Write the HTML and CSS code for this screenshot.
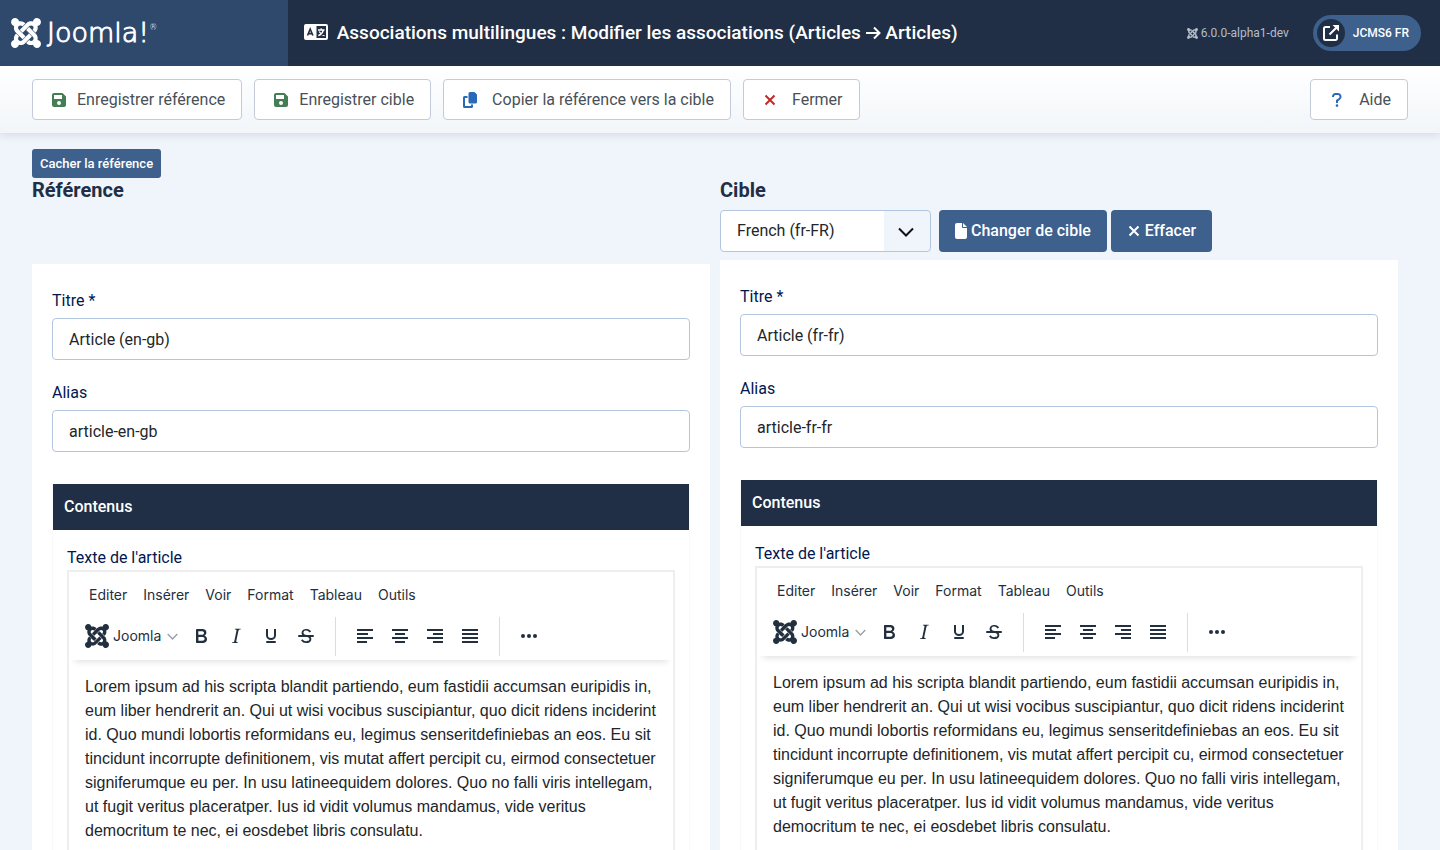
FILE: index.html
```html
<!DOCTYPE html>
<html lang="fr">
<head>
<meta charset="utf-8">
<meta name="viewport" content="width=device-width, initial-scale=1">
<title>Associations multilingues : Modifier les associations</title>
<link rel="stylesheet" href="styles.css">
</head>
<body>
<svg class="sprite" aria-hidden="true">
  <symbol id="joomla" viewBox="0 32 448 448"><path d="M.6 92.1C.6 58.8 27.4 32 60.4 32c30 0 54.5 21.9 59.2 50.2 32.6-7.6 67.1.6 96.5 30l-44.3 44.3c-20.5-20.5-42.6-16.3-55.4-3.5-14.3 14.3-14.3 37.9 0 52.2l99.5 99.5-44 44.3c-87.7-87.2-49.7-49.7-99.8-99.7-26.8-26.5-35-64.8-24.8-98.9C20.4 144.6.6 120.7.6 92.1zm129.5 116.4l44.3 44.3c10-10 89.7-89.7 99.7-99.8 14.3-14.3 37.6-14.3 51.9 0 12.8 12.8 17 35-3.5 55.4l44 44.3c31.2-31.2 38.5-67.6 28.9-101.2 29.2-4.1 51.9-29.2 51.9-59.5 0-33.2-26.8-60.1-59.8-60.1-30.3 0-55.4 22.5-59.5 51.6-33.8-9.9-71.7-1.5-98.3 25.1-18.3 19.1-71.1 71.5-99.6 99.9zm266.3 152.2c8.2-32.7-.9-68.5-26.3-93.9-11.8-12.2 5 4.7-99.5-99.7l-44.3 44.3 99.7 99.7c14.3 14.3 14.3 37.6 0 51.9-12.8 12.8-35 17-55.4-3.5l-44 44.3c27.6 30.2 68 38.8 102.7 28 5.5 27.4 29.7 48.1 58.9 48.1 33 0 59.8-26.8 59.8-60.1 0-30.2-22.5-55-51.6-59.1zm-84.3-53.1l-44-44.3c-87 86.4-50.4 50.4-99.7 99.8-14.3 14.3-37.6 14.3-51.9 0-13.1-13.4-16.9-35.3 3.2-55.4l-44-44.3c-30.2 30.2-38 65.2-29.5 98.3-26.7 6-46.2 29.9-46.2 58.2C0 453.2 26.8 480 59.8 480c28.6 0 52.5-19.8 58.6-46.7 32.7 8.2 68.5-.6 94.2-26 32.1-32 12.2-12.4 99.5-99.7z"/></symbol>
  <symbol id="save" viewBox="0 0 14 14"><path fill-rule="evenodd" d="M2 0h8.500L14 3.500V12a2 2 0 0 1-2 2H2a2 2 0 0 1-2-2V2a2 2 0 0 1 2-2zm0 2v4h8V2zm5 6a2 2 0 1 0 0 4 2 2 0 0 0 0-4z"/></symbol>
  <symbol id="copy" viewBox="0 0 14 16"><path d="M7 0h4.500L14 2.500V10a1.500 1.500 0 0 1-1.500 1.500H7A1.500 1.500 0 0 1 5.500 10V1.500A1.500 1.500 0 0 1 7 0z"/><path d="M1.500 4H4.500v2H2v8h6v-1.500h2v2a1.500 1.500 0 0 1-1.500 1.500h-7A1.500 1.500 0 0 1 0 14.500v-9A1.500 1.500 0 0 1 1.500 4z"/></symbol>
  <symbol id="cross" viewBox="0 0 12 12"><path d="M1.500 1.500l9 9m0-9l-9 9" fill="none" stroke="currentColor" stroke-width="2"/></symbol>
  <symbol id="help" viewBox="0 0 10 14"><path d="M1 4V3.500A2.500 2.500 0 0 1 3.500 1h2.500a2.700 2.700 0 0 1 1.300 5L5 7.600V10" fill="none" stroke="currentColor" stroke-width="2"/><circle cx="5" cy="12.600" r="1.300"/></symbol>
  <symbol id="file" viewBox="0 0 12 16"><path d="M2 0h5v4a1 1 0 0 0 1 1h4v9a2 2 0 0 1-2 2H2a2 2 0 0 1-2-2V2a2 2 0 0 1 2-2zm6 0l4 4H8z"/></symbol>
  <symbol id="chevron" viewBox="0 0 16 10"><path d="M1 1.500l7 7 7-7" fill="none" stroke="currentColor" stroke-width="2"/></symbol>
  <symbol id="bold" viewBox="0 0 24 24"><path fill-rule="evenodd" d="M7.8 19c-.3 0-.5 0-.6-.2l-.2-.5V5.700c0-.2 0-.4.2-.5l.6-.2h5c1.500 0 2.700.3 3.500 1 .7.6 1.100 1.400 1.100 2.500a3 3 0 0 1-.6 1.900c-.4.6-1 1-1.600 1.200.4.1.9.3 1.300.6s.8.7 1 1.200c.4.4.5 1 .5 1.600 0 1.300-.4 2.300-1.300 3-.8.7-2.100 1-3.800 1H7.800zm5-8.300c.6 0 1.200-.1 1.600-.5.4-.3.6-.7.6-1.300 0-1.100-.8-1.700-2.300-1.700H9.300v3.500h3.400zm.5 6c.7 0 1.300-.1 1.700-.4.4-.4.6-.9.6-1.500s-.2-1-.7-1.400c-.4-.3-1-.4-2-.4H9.400v3.800h4z"/></symbol>
  <symbol id="italic" viewBox="0 0 24 24"><path d="m16.700 4.700-.1.9h-.3c-.6 0-1 0-1.400.3-.3.3-.4.6-.5 1.100l-2.100 9.800v.6c0 .5.4.8 1.400.8h.2l-.2.8H8l.2-.8h.2c1.100 0 1.800-.5 2-1.500l2-9.800.1-.5c0-.6-.4-.8-1.400-.8h-.3l.2-.9h5.800z"/></symbol>
  <symbol id="underline" viewBox="0 0 24 24"><path d="M8 5v6.500a4 3.500 0 0 0 8 0V5" fill="none" stroke="currentColor" stroke-width="2"/><rect x="7" y="17" width="10" height="2" rx="1"/></symbol>
  <symbol id="strike" viewBox="0 0 24 24"><path d="M15.600 8.500c-.5-.7-1-1.100-1.300-1.300-.6-.4-1.300-.6-2-.6-2.700 0-2.800 1.700-2.800 2.100 0 1.600 1.800 2 3.200 2.300 4.400.9 4.600 2.800 4.600 3.900 0 1.400-.7 4.100-5 4.100A6.200 6.200 0 0 1 7 16.400l1.500-1.100c.4.6 1.600 2 3.700 2 1.600 0 2.500-.4 3-1.200.4-.8.3-2-.8-2.600-.7-.4-1.600-.7-2.900-1-1-.2-3.900-.8-3.900-3.600C7.600 6 10.300 5 12.400 5c2.900 0 4.200 1.600 4.700 2.400l-1.500 1.100z"/><rect x="4" y="11" width="16" height="2" rx="1"/></symbol>
  <symbol id="al-left" viewBox="0 0 24 24"><path d="M4 5h16v2H4zM4 9h11v2H4zM4 13h16v2H4zM4 17h10v2H4z"/></symbol>
  <symbol id="al-center" viewBox="0 0 24 24"><path d="M4 5h16v2H4zM7 9h10v2H7zM4 13h16v2H4zM7 17h10v2H7z"/></symbol>
  <symbol id="al-right" viewBox="0 0 24 24"><path d="M4 5h16v2H4zM10 9h10v2H10zM4 13h16v2H4zM10 17h10v2H10z"/></symbol>
  <symbol id="al-full" viewBox="0 0 24 24"><path d="M4 5h16v2H4zM4 9h16v2H4zM4 13h16v2H4zM4 17h16v2H4z"/></symbol>
  <symbol id="more" viewBox="0 0 24 24"><circle cx="6" cy="12" r="2"/><circle cx="12" cy="12" r="2"/><circle cx="18" cy="12" r="2"/></symbol>
</svg>

<header class="header">
  <a class="brand" href="#">
    <svg class="brand-mark" aria-hidden="true"><use href="#joomla"/></svg>
    <span class="brand-name">Joomla!<sup>®</sup></span>
  </a>
  <h1 class="page-title">
    <svg class="title-icon" viewBox="0 0 24 16" aria-hidden="true"><rect width="24" height="16" rx="2" fill="#fff"/><path fill="#202f45" d="M12.500 2H22v12h-9.500z"/><path d="M3.500 11.500L6.200 5l2.700 6.500M4.400 9.600H8" fill="none" stroke="#202f45" stroke-width="1.600"/><path d="M14 6h6.500M17.200 4.200V6M19.300 6.500c-.6 2.200-2.500 4.200-5 5.200M15.200 7.500c.9 1.800 2.800 3.500 5.300 4.200" fill="none" stroke="#fff" stroke-width="1.300"/></svg>
    Associations multilingues : Modifier les associations (Articles
    <svg class="title-arrow" viewBox="0 0 15 14" aria-label="vers"><path d="M0 7h13M8 1.500L13.500 7 8 12.500" fill="none" stroke="currentColor" stroke-width="2"/></svg>
    Articles)
  </h1>
  <div class="version"><svg aria-hidden="true"><use href="#joomla"/></svg>6.0.0-alpha1-dev</div>
  <a class="site-link" href="#">
    <span class="site-icon"><svg viewBox="0 0 16 16" aria-hidden="true"><path d="M7 2H2.500A1.500 1.500 0 0 0 1 3.500v10A1.500 1.500 0 0 0 2.500 15h10a1.500 1.500 0 0 0 1.500-1.500V9.500M6.500 9.500L13 3" fill="none" stroke="#fff" stroke-width="2"/><path d="M9.500 0H16v6.500z" fill="#fff"/></svg></span>
    JCMS6 FR
  </a>
</header>

<div class="subhead">
  <button class="tool" type="button"><svg class="ic-save" aria-hidden="true"><use href="#save"/></svg>Enregistrer référence</button>
  <button class="tool" type="button"><svg class="ic-save" aria-hidden="true"><use href="#save"/></svg>Enregistrer cible</button>
  <button class="tool" type="button"><svg class="ic-copy" aria-hidden="true"><use href="#copy"/></svg>Copier la référence vers la cible</button>
  <button class="tool" type="button"><svg class="ic-close" aria-hidden="true"><use href="#cross"/></svg>Fermer</button>
  <button class="tool tool-help" type="button"><svg class="ic-help" aria-hidden="true"><use href="#help"/></svg>Aide</button>
</div>

<main class="content">
  <button class="btn btn-small" type="button">Cacher la référence</button>
  <div class="columns">
    <section class="column">
      <div class="column-head column-head-ref"><h2>Référence</h2></div>
      <div class="panel">
        <div class="field"><label for="t1">Titre *</label><input id="t1" type="text" value="Article (en-gb)"></div>
        <div class="field"><label for="a1">Alias</label><input id="a1" type="text" value="article-en-gb"></div>
        <div class="box">
          <h3>Contenus</h3>
          <div class="box-body">
            <span class="box-label" id="l1">Texte de l'article</span>
            <div class="editor">
              <div class="editor-head">
                <div class="menubar"><button type="button">Editer</button><button type="button">Insérer</button><button type="button">Voir</button><button type="button">Format</button><button type="button">Tableau</button><button type="button">Outils</button></div>
                <div class="toolbar">
                  <button class="cms" type="button"><svg class="cms-icon" aria-hidden="true"><use href="#joomla"/></svg>Joomla<svg class="cms-arrow" aria-hidden="true"><use href="#chevron"/></svg></button>
                  <div class="group"><button type="button" aria-label="Gras"><svg><use href="#bold"/></svg></button><button type="button" aria-label="Italique"><svg><use href="#italic"/></svg></button><button type="button" aria-label="Souligné"><svg><use href="#underline"/></svg></button><button type="button" aria-label="Barré"><svg><use href="#strike"/></svg></button></div>
                  <div class="group"><button type="button" aria-label="Aligner à gauche"><svg><use href="#al-left"/></svg></button><button type="button" aria-label="Centrer"><svg><use href="#al-center"/></svg></button><button type="button" aria-label="Aligner à droite"><svg><use href="#al-right"/></svg></button><button type="button" aria-label="Justifier"><svg><use href="#al-full"/></svg></button></div>
                  <div class="group"><button type="button" aria-label="Plus"><svg><use href="#more"/></svg></button></div>
                </div>
              </div>
              <div class="editor-text" contenteditable="true" spellcheck="false" role="textbox" aria-labelledby="l1">Lorem ipsum ad his scripta blandit partiendo, eum fastidii accumsan euripidis in, eum liber hendrerit an. Qui ut wisi vocibus suscipiantur, quo dicit ridens inciderint id. Quo mundi lobortis reformidans eu, legimus senseritdefiniebas an eos. Eu sit tincidunt incorrupte definitionem, vis mutat affert percipit cu, eirmod consectetuer signiferumque eu per. In usu latineequidem dolores. Quo no falli viris intellegam, ut fugit veritus placeratper. Ius id vidit volumus mandamus, vide veritus democritum te nec, ei eosdebet libris consulatu.</div>
            </div>
          </div>
        </div>
      </div>
    </section>

    <section class="column">
      <div class="column-head">
        <h2>Cible</h2>
        <div class="target-bar">
          <div class="select"><select aria-label="Langue cible"><option>French (fr-FR)</option></select><svg aria-hidden="true"><use href="#chevron"/></svg></div>
          <button class="btn" type="button"><svg class="ic-file" aria-hidden="true"><use href="#file"/></svg>Changer de cible</button>
          <button class="btn" type="button"><svg class="ic-clear" aria-hidden="true"><use href="#cross"/></svg>Effacer</button>
        </div>
      </div>
      <div class="panel">
        <div class="field"><label for="t2">Titre *</label><input id="t2" type="text" value="Article (fr-fr)"></div>
        <div class="field"><label for="a2">Alias</label><input id="a2" type="text" value="article-fr-fr"></div>
        <div class="box">
          <h3>Contenus</h3>
          <div class="box-body">
            <span class="box-label" id="l2">Texte de l'article</span>
            <div class="editor">
              <div class="editor-head">
                <div class="menubar"><button type="button">Editer</button><button type="button">Insérer</button><button type="button">Voir</button><button type="button">Format</button><button type="button">Tableau</button><button type="button">Outils</button></div>
                <div class="toolbar">
                  <button class="cms" type="button"><svg class="cms-icon" aria-hidden="true"><use href="#joomla"/></svg>Joomla<svg class="cms-arrow" aria-hidden="true"><use href="#chevron"/></svg></button>
                  <div class="group"><button type="button" aria-label="Gras"><svg><use href="#bold"/></svg></button><button type="button" aria-label="Italique"><svg><use href="#italic"/></svg></button><button type="button" aria-label="Souligné"><svg><use href="#underline"/></svg></button><button type="button" aria-label="Barré"><svg><use href="#strike"/></svg></button></div>
                  <div class="group"><button type="button" aria-label="Aligner à gauche"><svg><use href="#al-left"/></svg></button><button type="button" aria-label="Centrer"><svg><use href="#al-center"/></svg></button><button type="button" aria-label="Aligner à droite"><svg><use href="#al-right"/></svg></button><button type="button" aria-label="Justifier"><svg><use href="#al-full"/></svg></button></div>
                  <div class="group"><button type="button" aria-label="Plus"><svg><use href="#more"/></svg></button></div>
                </div>
              </div>
              <div class="editor-text" contenteditable="true" spellcheck="false" role="textbox" aria-labelledby="l2">Lorem ipsum ad his scripta blandit partiendo, eum fastidii accumsan euripidis in, eum liber hendrerit an. Qui ut wisi vocibus suscipiantur, quo dicit ridens inciderint id. Quo mundi lobortis reformidans eu, legimus senseritdefiniebas an eos. Eu sit tincidunt incorrupte definitionem, vis mutat affert percipit cu, eirmod consectetuer signiferumque eu per. In usu latineequidem dolores. Quo no falli viris intellegam, ut fugit veritus placeratper. Ius id vidit volumus mandamus, vide veritus democritum te nec, ei eosdebet libris consulatu.</div>
            </div>
          </div>
        </div>
      </div>
    </section>
  </div>
</main>
</body>
</html>
```
FILE: styles.css
```css
* {
  box-sizing: border-box;
}

body {
  margin: 0;
  min-height: 100vh;
  display: flex;
  flex-direction: column;
  background: #f0f4fb;
  color: #22262a;
  font: 16px/24px Roboto, sans-serif;
}

button,
input,
select {
  font: inherit;
  color: inherit;
}

h1,
h2,
h3 {
  margin: 0;
}

svg {
  fill: currentColor;
  flex: none;
}

.sprite {
  display: none;
}

/* Header */
.header {
  display: flex;
  align-items: center;
  height: 66px;
  padding-right: 19px;
  background: #202f45;
  color: #fff;
}

.brand {
  display: flex;
  align-items: center;
  gap: 6px;
  width: 288px;
  height: 100%;
  padding-left: 11px;
  background: #2f496c;
  color: #fff;
  text-decoration: none;
}

.brand-mark {
  width: 30px;
  height: 30px;
}

.brand-name {
  font: 200 27px/30px "DejaVu Sans Light", "DejaVu Sans", sans-serif;
  -webkit-text-stroke: 1px #fff;
}

.brand-name sup {
  font-size: 8px;
  line-height: 8px;
  vertical-align: 12px;
  -webkit-text-stroke: 0;
}

.page-title {
  flex: 1;
  padding-left: 16px;
  font-size: 19px;
  font-weight: 500;
  line-height: 26px;
}

.title-icon {
  width: 24px;
  height: 16px;
  margin-right: 4px;
  vertical-align: -1px;
}

.title-arrow {
  width: 15px;
  height: 14px;
  vertical-align: -1px;
}

.version {
  display: flex;
  align-items: center;
  gap: 3px;
  margin-right: 24px;
  color: #b3bdcb;
  font-size: 12px;
}

.version svg {
  width: 11px;
  height: 11px;
}

.site-link {
  display: flex;
  align-items: center;
  gap: 8px;
  height: 36px;
  padding: 0 12px 0 4px;
  border-radius: 18px;
  background: #3d608d;
  color: #fff;
  font-size: 12px;
  font-weight: 500;
  text-decoration: none;
}

.site-icon {
  display: grid;
  place-items: center;
  width: 28px;
  height: 28px;
  border-radius: 50%;
  background: #202f45;
}

.site-icon svg {
  width: 16px;
  height: 16px;
}

/* Action bar */
.subhead {
  display: flex;
  gap: 12px;
  padding: 13px 32px;
  background: linear-gradient(#fff, #f2f6f9);
  box-shadow: 0 2px 8px rgba(40, 70, 120, 0.15);
}

.tool {
  display: flex;
  align-items: center;
  height: 41px;
  padding: 0 16px;
  border: 1px solid #c3cad8;
  border-radius: 4px;
  background: #fff;
  color: #495057;
}

.tool-help {
  margin-left: auto;
}

.tool svg {
  width: 20px;
  height: 14px;
  margin-right: 12px;
}

.tool .ic-save {
  margin-right: 8px;
  color: #457d54;
}

.tool .ic-copy {
  height: 16px;
  color: #2a69b8;
}

.tool .ic-close {
  height: 12px;
  color: #c52827;
}

.tool .ic-help {
  color: #2a69b8;
}

/* Content */
.content {
  flex: 1;
  display: flex;
  flex-direction: column;
  padding: 16px 32px 0;
}

.btn {
  display: flex;
  align-items: center;
  gap: 4px;
  height: 42px;
  padding: 0 16px;
  border: 0;
  border-radius: 4px;
  background: #3d608d;
  color: #fff;
  font-weight: 500;
}

.btn-small {
  align-self: flex-start;
  height: 29px;
  padding: 0 8px;
  border-radius: 3px;
  font-size: 13px;
}

.ic-file {
  width: 12px;
  height: 16px;
}

.ic-clear {
  width: 14px;
  height: 12px;
}

.columns {
  flex: 1;
  display: grid;
  grid-template-columns: 1fr 1fr;
}

.column {
  display: flex;
  flex-direction: column;
  min-width: 0;
  padding-right: 10px;
}

.column-head {
  padding-bottom: 8px;
}

.column-head-ref {
  min-height: 86px;
}

h2 {
  color: #202f45;
  font-size: 20px;
  line-height: 24px;
}

.target-bar {
  display: flex;
  gap: 4px;
  margin-top: 8px;
}

.select {
  position: relative;
  width: 211px;
  margin-right: 4px;
}

.select select {
  width: 100%;
  height: 42px;
  padding: 0 48px 0 16px;
  border: 1px solid #b3c6df;
  border-radius: 4px;
  appearance: none;
  background: linear-gradient(#f0f4fb, #f0f4fb) right / 46px 100% no-repeat #fff;
}

.select svg {
  position: absolute;
  top: 17px;
  right: 17px;
  width: 16px;
  height: 10px;
  color: #111;
  pointer-events: none;
}

.panel {
  flex: 1;
  display: flex;
  flex-direction: column;
  padding: 24px 20px 0;
  background: #fff;
}

.field {
  display: flex;
  flex-direction: column;
  gap: 4px;
  margin-bottom: 20px;
}

label,
.box-label {
  color: #00184f;
}

label {
  line-height: 26px;
}

.field input {
  width: 100%;
  height: 42px;
  padding: 0 16px;
  border: 1px solid #b3c6df;
  border-radius: 4px;
  background: #fff;
}

.box {
  flex: 1;
  display: flex;
  flex-direction: column;
  margin-top: 12px;
  border: solid #f9f9f9;
  border-width: 0 1px;
}

.box h3 {
  padding: 11px;
  background: #202f45;
  color: #fff;
  font-size: 16px;
  font-weight: 500;
  line-height: 24px;
}

.box-body {
  flex: 1;
  display: flex;
  flex-direction: column;
  padding: 16px 14px 0;
}

/* Editor */
.editor {
  flex: 1;
  border: 2px solid #eee;
  border-bottom: 0;
  color: #222f3e;
}

.editor-head {
  height: 88px;
  padding: 6px 2px 4px;
  background: #fff;
  box-shadow: 0 8px 6px -6px rgba(34, 47, 62, 0.14);
}

.editor button {
  border: 0;
  background: none;
}

.menubar {
  display: flex;
  padding-left: 10px;
  font: 14px/34px Inter, sans-serif;
}

.menubar button {
  height: 34px;
  padding: 0 8px;
}

.toolbar {
  display: flex;
  align-items: center;
  height: 40px;
  margin-top: 4px;
  font: 14px/34px Inter, sans-serif;
}

.toolbar .cms {
  display: flex;
  align-items: center;
  height: 34px;
  padding: 0 6px 0 14px;
}

.cms-icon {
  width: 24px;
  height: 24px;
  margin-right: 4px;
}

.cms-arrow {
  width: 11px;
  height: 7px;
  margin-left: 6px;
  color: #9a9fa6;
}

.group {
  display: flex;
  gap: 1px;
  height: 39px;
  align-items: center;
}

.group + .group {
  margin-left: 12px;
  padding-left: 12px;
  border-left: 1px solid #d9dce4;
}

.group button {
  display: grid;
  place-items: center;
  width: 34px;
  height: 34px;
  padding: 0;
}

.group svg {
  width: 24px;
  height: 24px;
}

.editor-text {
  padding: 15px 14px 0 16px;
  color: #22262a;
  font-family: "Liberation Sans", Arial, sans-serif;
  outline: none;
}
```
